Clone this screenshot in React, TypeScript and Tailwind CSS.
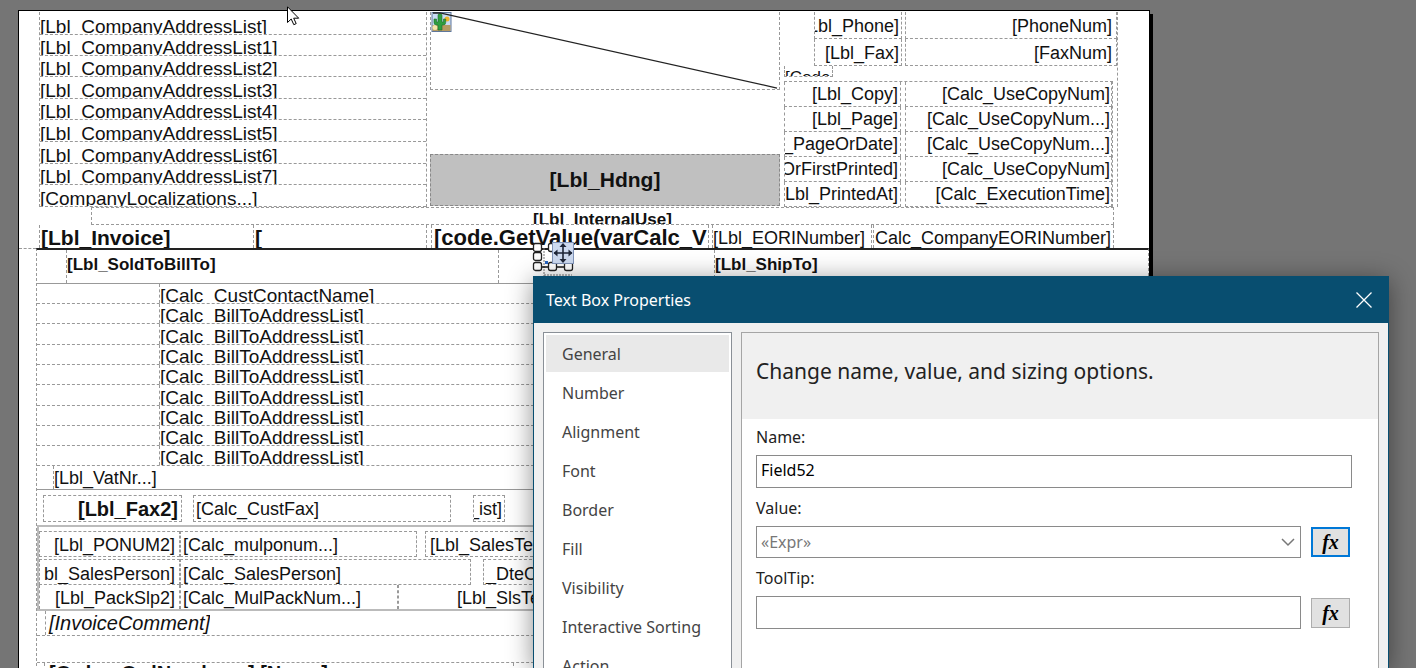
import React from "react";
import clsx from "clsx";

const addressLines = [
  { text: "[Lbl_CompanyAddressList]", height: "h-[23px]" },
  { text: "[Lbl_CompanyAddressList1]", height: "h-[21px]" },
  { text: "[Lbl_CompanyAddressList2]", height: "h-[21px]" },
  { text: "[Lbl_CompanyAddressList3]", height: "h-[22px]" },
  { text: "[Lbl_CompanyAddressList4]", height: "h-[21px]" },
  { text: "[Lbl_CompanyAddressList5]", height: "h-[22px]" },
  { text: "[Lbl_CompanyAddressList6]", height: "h-[22px]" },
  { text: "[Lbl_CompanyAddressList7]", height: "h-[21px]" },
  { text: "[CompanyLocalizations...]", height: "h-[22px]" },
];

const contactRows = [
  { label: "[Lbl_Phone]", value: "[PhoneNum]" },
  { label: "[Lbl_Fax]", value: "[FaxNum]" },
];

const printRows = [
  { label: "[Lbl_Copy]", value: "[Calc_UseCopyNum]" },
  { label: "[Lbl_Page]", value: "[Calc_UseCopyNum...]" },
  { label: "_PageOrDate]", value: "[Calc_UseCopyNum...]" },
  { label: "OrFirstPrinted]", value: "[Calc_UseCopyNum]" },
  { label: "Lbl_PrintedAt]", value: "[Calc_ExecutionTime]" },
];

const billToRows = [
  "[Calc_CustContactName]",
  "[Calc_BillToAddressList]",
  "[Calc_BillToAddressList]",
  "[Calc_BillToAddressList]",
  "[Calc_BillToAddressList]",
  "[Calc_BillToAddressList]",
  "[Calc_BillToAddressList]",
  "[Calc_BillToAddressList]",
  "[Calc_BillToAddressList]",
];

const pages = [
  "General",
  "Number",
  "Alignment",
  "Font",
  "Border",
  "Fill",
  "Visibility",
  "Interactive Sorting",
  "Action",
];

type CellProps = {
  className?: string;
  children?: React.ReactNode;
};

function Cell({ className, children }: CellProps) {
  return (
    <div
      className={clsx(
        "flex overflow-hidden whitespace-nowrap border-dashed border-[#999]",
        className
      )}
    >
      {children}
    </div>
  );
}

function CactusIcon() {
  return (
    <svg width="21" height="20" viewBox="0 0 20 20" aria-hidden="true">
      <rect x="0.5" y="0.5" width="19" height="19" fill="#c9dcf3" stroke="#5f779c" />
      <rect x="1" y="13" width="18" height="6" fill="#b59a62" />
      <circle cx="3.5" cy="15.5" r="2.5" fill="#f5e6a8" />
      <circle cx="15.5" cy="7" r="2.5" fill="#f0b429" />
      <path
        d="M6.500 18V13H5a2.500 2.500 0 0 1-2.500-2.500V7H5v3h1.500V3.500a2 2 0 0 1 4 0V10H12V7h2.200v3.500A2.500 2.500 0 0 1 11.700 13h-1.200v5z"
        fill="#2f9e3f"
        stroke="#1c6b2a"
        strokeWidth="0.6"
      />
    </svg>
  );
}

function SelectionHandles() {
  return (
    <svg
      className="absolute left-[532px] top-[240px]"
      width="46"
      height="37"
      viewBox="0 0 46 37"
      aria-hidden="true"
    >
      <path d="M12 8V36M12 35H40" stroke="#777" strokeDasharray="2 1" />
      <path d="M10 27H34" stroke="#111" strokeWidth="1.5" />
      <g fill="#fff" stroke="#222" strokeWidth="1.3">
        <rect x="1.5" y="3.5" width="8" height="8" rx="2" />
        <rect x="16.5" y="3.5" width="8" height="8" rx="2" />
        <rect x="1.5" y="12.5" width="8" height="8" rx="2" />
        <rect x="1.5" y="22.5" width="8" height="8" rx="2" />
        <rect x="16.5" y="22.5" width="8" height="8" rx="2" />
        <rect x="32.5" y="22.5" width="8" height="8" rx="2" />
      </g>
      <rect x="13" y="21" width="3" height="3" fill="#2563c0" />
      <rect x="20.5" y="2.5" width="21" height="21" fill="#cddaf0" stroke="#7f93b8" />
      <path d="M31 4V22M22 13H40" stroke="#1e2638" strokeWidth="1.6" />
      <path
        d="M31 3l3.5 4h-7zM31 23l3.5-4h-7zM21.500 13l4-3.500v7zM40.500 13l-4-3.500v7z"
        fill="#1e2638"
      />
    </svg>
  );
}

function MousePointer() {
  return (
    <svg
      className="absolute left-[287px] top-[6px]"
      width="13"
      height="20"
      viewBox="0 0 13 20"
      aria-hidden="true"
    >
      <path
        d="M0.500 0.800V16.500L4.200 13L6.800 18.700L9.200 17.600L6.700 12.200H11.700Z"
        fill="#fff"
        stroke="#000"
      />
    </svg>
  );
}

function ReportHeader() {
  return (
    <section className="pt-px pl-5 pr-[31px]">
      <div className="flex">
        <div className="w-[388px] shrink-0 border-x border-dashed border-[#999]">
          {addressLines.map((line) => (
            <Cell
              key={line.text}
              className={clsx("items-end border-b text-[19px] leading-[15px]", line.height)}
            >
              {line.text}
            </Cell>
          ))}
        </div>

        <div className="ml-[3px] flex flex-1 flex-col">
          <div className="relative h-[78px] border-x border-b border-dashed border-[#999]">
            <CactusIcon />
            <svg
              className="absolute inset-0 h-full w-full"
              viewBox="0 0 348 78"
              preserveAspectRatio="none"
              aria-hidden="true"
            >
              <path d="M2 1H9L346 77" fill="none" stroke="#222" strokeWidth="1.3" />
            </svg>
          </div>
          <div className="mt-16 flex h-[52px] items-center justify-center border border-dashed border-[#888] bg-[#c0c0c0] text-[21px] font-bold">
            [Lbl_Hdng]
          </div>
        </div>

        <div className="ml-1 w-[334px] shrink-0 border-r border-dashed border-[#999] text-[18px] leading-6">
          {contactRows.map((row) => (
            <div key={row.label} className="flex h-[27px] gap-[3px] pl-[30px]">
              <Cell className="w-[88px] items-end justify-end border-x border-b pr-[2px]">
                {row.label}
              </Cell>
              <Cell className="flex-1 items-end justify-end border-x border-b pr-1">
                {row.value}
              </Cell>
            </div>
          ))}
          <div className="flex h-[15px]">
            <Cell className="h-[11px] w-[49px] border-x border-b text-[17px]">[Code</Cell>
          </div>
          <div className="mr-1 border-t border-r border-dashed border-[#999]">
            {printRows.map((row) => (
              <div key={row.label} className="flex h-[25px] gap-1">
                <Cell className="w-[117px] items-end justify-end border-x border-b pr-[2px]">
                  {row.label}
                </Cell>
                <Cell className="flex-1 items-end justify-end border-x border-b pr-px">
                  {row.value}
                </Cell>
              </div>
            ))}
          </div>
        </div>
      </div>

      <Cell className="mr-1 ml-[52px] h-[18px] justify-center border text-[17px] leading-[23px] font-bold">
        [Lbl_InternalUse]
      </Cell>

      <div className="mr-1 flex h-[23px] text-[21px] leading-[26px] font-bold">
        <Cell className="w-[215px] border-x pl-px">[Lbl_Invoice]</Cell>
        <Cell className="w-[173px] border-r pl-px">[</Cell>
        <Cell className="ml-1 flex-1 border-x pl-[2px] text-[22px]">
          [code.GetValue(varCalc_V
        </Cell>
        <Cell className="ml-[3px] w-[160px] border-x text-[18px] font-normal">
          [Lbl_EORINumber]
        </Cell>
        <Cell className="ml-px w-[241px] justify-end border-x pr-[2px] text-[18px] font-normal">
          Calc_CompanyEORINumber]
        </Cell>
      </div>
    </section>
  );
}

function ReportBody() {
  return (
    <div className="flex">
      <div className="h-4 w-[17px] border-t border-dashed border-[#999]" />
      <section className="min-w-0 flex-1 border-x border-t-2 border-dashed border-x-[#999] border-t-[#222] [border-top-style:solid]">
        <div className="flex h-[34px] border-b border-[#999] text-[17px] leading-[29px] font-bold">
          <Cell className="ml-[29px] w-[433px] border-x">[Lbl_SoldToBillTo]</Cell>
          <Cell className="ml-[215px] flex-1 border-l">[Lbl_ShipTo]</Cell>
        </div>

        {billToRows.map((text, index) => (
          <div
            key={index}
            className={clsx(
              "flex border-b border-dashed border-[#999]",
              index === 2 || index === 5 ? "h-[21px]" : "h-5"
            )}
          >
            <Cell className="ml-[122px] flex-1 items-end border-l text-[19px] leading-[15px]">
              {text}
            </Cell>
          </div>
        ))}

        <div className="flex h-6 border-b border-[#999] text-[18px] leading-6">
          <Cell className="ml-4 border-l">[Lbl_VatNr...]</Cell>
        </div>

        <div className="flex h-[37px] border-b-2 border-[#bbb] pt-[5px] pl-1.5 text-[18px] leading-[27px]">
          <Cell className="h-[27px] w-[139px] justify-end border pr-[3px] text-[20px] font-bold">
            [Lbl_Fax2]
          </Cell>
          <Cell className="ml-[11px] h-[27px] w-[258px] border pl-[2px]">[Calc_CustFax]</Cell>
          <Cell className="ml-[22px] h-[27px] w-8 justify-end border pr-[2px]">_ist]</Cell>
        </div>

        <div className="border-b-2 border-l-2 border-[#bbb] pt-1 text-[18px]">
          <div className="flex h-[26px] leading-[27px]">
            <Cell className="w-[141px] justify-end border pr-1">[Lbl_PONUM2]</Cell>
            <Cell className="w-[237px] border pl-[2px]">[Calc_mulponum...]</Cell>
            <Cell className="ml-2 flex-1 border pl-1">[Lbl_SalesTerms]</Cell>
          </div>
          <div className="mt-[2px] flex h-[26px] leading-[29px]">
            <Cell className="w-[141px] justify-end border pr-1">bl_SalesPerson]</Cell>
            <Cell className="w-[291px] border pl-[2px]">[Calc_SalesPerson]</Cell>
            <Cell className="ml-3 w-[90px] border pl-[2px]">_DteOrder]</Cell>
          </div>
          <div className="flex h-6 leading-[26px]">
            <Cell className="w-[141px] justify-end border-x pr-1">[Lbl_PackSlp2]</Cell>
            <Cell className="w-[218px] border-x pl-[2px]">[Calc_MulPackNum...]</Cell>
            <Cell className="flex-1 border-x pl-[58px]">[Lbl_SlsTerms]</Cell>
          </div>
        </div>

        <div className="flex h-[25px] border-b border-dashed border-[#999] text-[20px] leading-6 italic">
          <Cell className="ml-2 border-l pl-[3px]">[InvoiceComment]</Cell>
        </div>
        <div className="h-[27px] border-b border-dashed border-[#999]" />
        <div className="flex h-12 text-[20px] leading-5 font-bold">
          <Cell className="ml-[7px] w-[470px] border-x pl-1">[Order_OrdNumber...]&nbsp;[Name]</Cell>
        </div>
      </section>
    </div>
  );
}

function ExpressionButton({ label, active }: { label: string; active?: boolean }) {
  return (
    <button
      type="button"
      aria-label={label}
      className={clsx(
        "flex h-[30px] w-[39px] items-center justify-center bg-[#e1e1e1] font-['Liberation_Serif',serif] text-[20px] leading-6 font-black text-black italic",
        active ? "border-2 border-[#0078d7]" : "border border-[#adadad]"
      )}
    >
      fx
    </button>
  );
}

function PropertiesDialog() {
  return (
    <div
      role="dialog"
      aria-labelledby="dialog-title"
      className="absolute top-[276px] right-[27px] -bottom-px left-[533px] flex flex-col overflow-hidden border border-[#084e70] bg-[#f0f0f0] font-['Noto_Sans',sans-serif] text-[16px] shadow-[0_4px_24px_rgba(0,0,0,0.45)]"
    >
      <div className="flex h-[46px] shrink-0 items-center justify-between bg-[#084e70] pr-4 pl-3 text-white">
        <h1 id="dialog-title">Text Box Properties</h1>
        <button type="button" aria-label="Close">
          <svg width="16" height="16" viewBox="0 0 16 16" aria-hidden="true">
            <path d="M0.500 0.500L15.500 15.500M15.500 0.500L0.500 15.500" stroke="#fff" strokeWidth="1.3" />
          </svg>
        </button>
      </div>

      <div className="flex min-h-0 flex-1 gap-[9px] px-[9px] pt-[9px]">
        <nav className="w-[189px] shrink-0 overflow-hidden border border-b-0 border-[#8a9097] bg-white px-[2px] pt-[2px] text-[#444]">
          {pages.map((page) => (
            <a
              key={page}
              href="#"
              className={clsx(
                "mb-[2px] flex h-[37px] items-center pl-4",
                page === "General" && "bg-[#e9e9e9]"
              )}
            >
              {page}
            </a>
          ))}
        </nav>

        <div className="flex-1 overflow-hidden border border-b-0 border-[#a5a5a5] bg-white text-[#222]">
          <h2 className="flex h-[86px] items-center bg-[#f0f0f0] pb-2 pl-3.5 text-[21px]">
            Change name, value, and sizing options.
          </h2>
          <form className="flex flex-col pt-1.5 pr-[26px] pl-3.5">
            <label htmlFor="name" className="leading-6">
              Name:
            </label>
            <input
              id="name"
              defaultValue="Field52"
              className="mt-1.5 h-[33px] border border-[#8a8a8a] bg-white px-1 pb-1 text-black"
            />

            <label htmlFor="value" className="mt-2 leading-6">
              Value:
            </label>
            <div className="mt-1.5 flex items-center gap-2.5 pr-[2px]">
              <div className="relative flex-1">
                <select
                  id="value"
                  className="block h-8 w-full appearance-none border border-[#8a8a8a] bg-white px-1 text-[#777]"
                >
                  <option>«Expr»</option>
                </select>
                <svg
                  className="pointer-events-none absolute top-3 right-1.5"
                  width="14"
                  height="9"
                  viewBox="0 0 14 9"
                  aria-hidden="true"
                >
                  <path d="M1 1L7 7L13 1" fill="none" stroke="#777" strokeWidth="1.5" />
                </svg>
              </div>
              <ExpressionButton label="Value expression" active />
            </div>

            <label htmlFor="tooltip" className="mt-2 leading-6">
              ToolTip:
            </label>
            <div className="mt-1.5 flex items-center gap-2.5 pr-[2px]">
              <input id="tooltip" className="h-[33px] flex-1 border border-[#8a8a8a] bg-white px-1" />
              <ExpressionButton label="ToolTip expression" />
            </div>
          </form>
        </div>
      </div>
    </div>
  );
}

export default function App() {
  return (
    <div className="relative h-screen overflow-hidden bg-[#757575] pt-2.5 pr-[266px] pl-[18px] font-['Liberation_Sans',Arial,sans-serif] text-[#111]">
      <main className="border border-black bg-white shadow-[3px_4px_0_#000]">
        <ReportHeader />
        <ReportBody />
      </main>
      <SelectionHandles />
      <MousePointer />
      <PropertiesDialog />
    </div>
  );
}
